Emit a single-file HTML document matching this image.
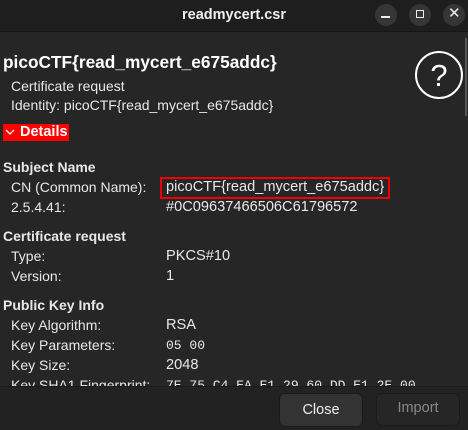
<!DOCTYPE html>
<html><head><style>
*{margin:0;padding:0;box-sizing:border-box}
body{width:468px;height:430px;background:#262626;color:#e8e8e8;font-family:"Liberation Sans","DejaVu Sans",sans-serif;font-size:14px;position:relative;overflow:hidden}
.a{position:absolute;white-space:nowrap}
.b{font-weight:bold}
.v{font-size:14.6px}
.m{font-family:"Liberation Mono",monospace;font-size:13px}
</style></head><body>
<div class="a" style="left:0;top:0;width:468px;height:32px;background:#1e1e1e;border-bottom:1px solid #161616"></div>
<div class="a b" style="left:0;width:468px;top:7px;text-align:center;font-size:14.5px;color:#f0f0f0">readmycert.csr</div>
<div class="a" style="left:375px;top:4px;width:22px;height:22px;border-radius:50%;background:#363636"></div>
<div class="a" style="left:381px;top:16px;width:9px;height:1.5px;background:#eee"></div>
<div class="a" style="left:409px;top:4px;width:22px;height:22px;border-radius:50%;background:#363636"></div>
<div class="a" style="left:416px;top:10px;width:8px;height:8px;border:1.5px solid #eee"></div>
<div class="a" style="left:443px;top:4px;width:22px;height:22px;border-radius:50%;background:#363636"></div>
<div class="a" style="left:448px;top:4px;font-size:15px;color:#eee">✕</div>
<div class="a" style="left:465px;top:38px;width:2px;height:78px;background:#555"></div>
<div class="a b" style="left:3px;top:52px;font-size:17.3px;color:#fff">picoCTF{read_mycert_e675addc}</div>
<div class="a" style="left:11px;top:78px">Certificate request</div>
<div class="a" style="left:11px;top:97px">Identity: picoCTF{read_mycert_e675addc}</div>
<svg class="a" style="left:414px;top:50px" width="50" height="50"><circle cx="25" cy="25" r="23" fill="none" stroke="#fff" stroke-width="2"/><text x="25" y="36" font-size="31" fill="#fff" text-anchor="middle" font-family="Liberation Sans">?</text></svg>
<div class="a b" style="left:3px;top:124px;width:66px;height:17px;background:#f00;color:#fff;font-size:14.5px;padding-left:17px;line-height:17px">Details</div>
<svg class="a" style="left:5px;top:129px" width="10" height="7"><path d="M1 1 L5 5 L9 1" stroke="#fff" fill="none" stroke-width="1.3"/></svg>
<div class="a b" style="left:3px;top:159px;font-size:14px">Subject Name</div>
<div class="a" style="left:11px;top:179px">CN (Common Name):</div>
<div class="a" style="left:160px;top:177px;width:230px;height:22px;border:2px solid #e00"></div>
<div class="a v" style="left:166px;top:179px">picoCTF{read_mycert_e675addc}</div>
<div class="a" style="left:11px;top:199px">2.5.4.41:</div>
<div class="a v" style="left:166px;top:199px">#0C09637466506C61796572</div>
<div class="a b" style="left:3px;top:228px;font-size:14px">Certificate request</div>
<div class="a" style="left:11px;top:248px">Type:</div>
<div class="a v" style="left:166px;top:248px">PKCS#10</div>
<div class="a" style="left:11px;top:268px">Version:</div>
<div class="a v" style="left:166px;top:268px">1</div>
<div class="a b" style="left:3px;top:297px;font-size:14px">Public Key Info</div>
<div class="a" style="left:11px;top:317px">Key Algorithm:</div>
<div class="a v" style="left:166px;top:317px">RSA</div>
<div class="a" style="left:11px;top:337px">Key Parameters:</div>
<div class="a m" style="left:166px;top:338px">05 00</div>
<div class="a" style="left:11px;top:357px">Key Size:</div>
<div class="a v" style="left:166px;top:357px">2048</div>
<div class="a" style="left:11px;top:377px">Key SHA1 Fingerprint:</div>
<div class="a m" style="left:166px;top:378px">7E 75 C4 EA E1 29 60 DD E1 2E 00</div>
<div class="a" style="left:0;top:386px;width:468px;height:44px;background:#222;border-top:1px solid #1a1a1a"></div>
<div class="a" style="left:279px;top:393px;width:84px;height:34px;border-radius:6px;background:#333;border:1px solid #1a1a1a;text-align:center;line-height:32px;color:#eee;font-size:14.5px">Close</div>
<div class="a" style="left:376px;top:393px;width:84px;height:33px;border-radius:6px;background:#262626;border:1px solid #1a1a1a;text-align:center;line-height:28px;color:#888;font-size:14.5px">Import</div>
</body></html>
